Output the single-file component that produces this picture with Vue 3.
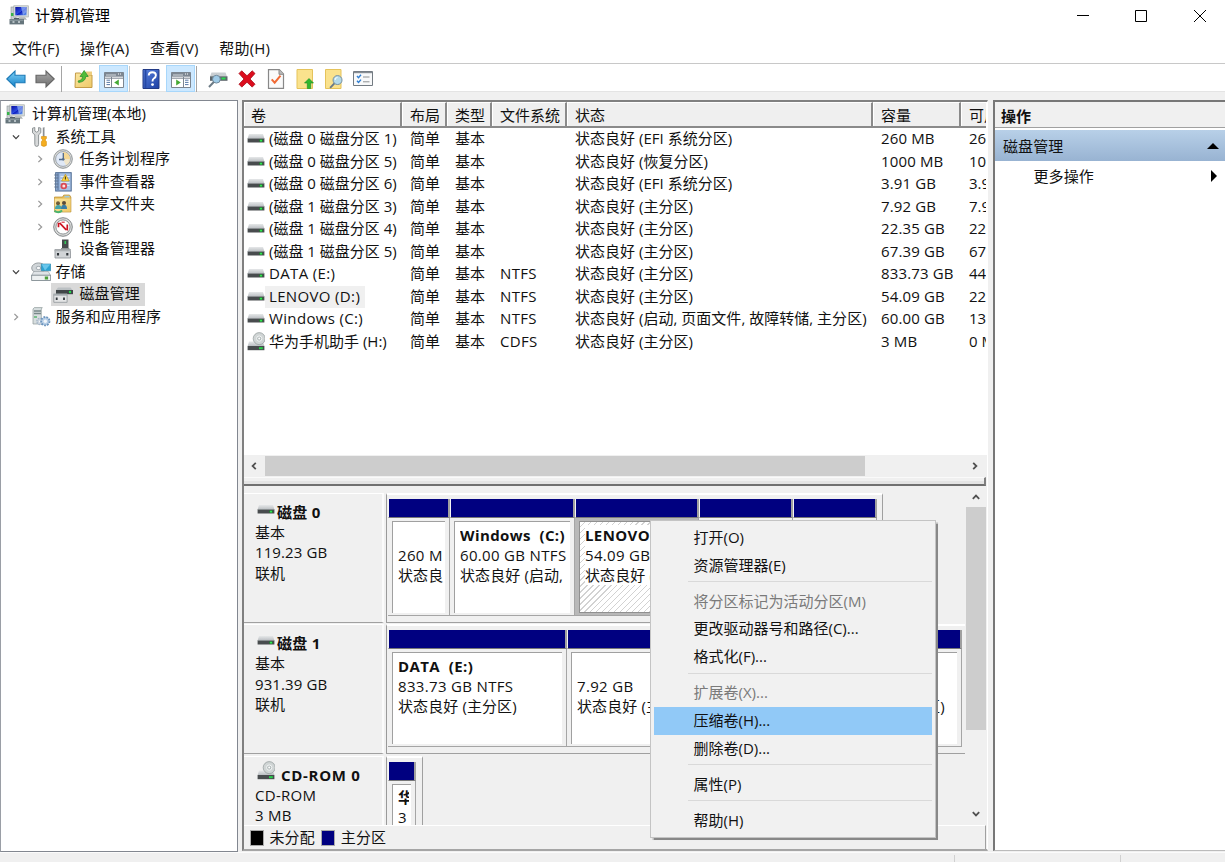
<script setup>
const menus = ['文件(F)', '操作(A)', '查看(V)', '帮助(H)']

const tree = [
  { label: '计算机管理(本地)', icon: 'computer', level: 0, arrow: '' },
  { label: '系统工具', icon: 'tools', level: 1, arrow: 'open' },
  { label: '任务计划程序', icon: 'clock', level: 2, arrow: 'closed' },
  { label: '事件查看器', icon: 'book', level: 2, arrow: 'closed' },
  { label: '共享文件夹', icon: 'share', level: 2, arrow: 'closed' },
  { label: '性能', icon: 'gauge', level: 2, arrow: 'closed' },
  { label: '设备管理器', icon: 'device', level: 2, arrow: '' },
  { label: '存储', icon: 'storage', level: 1, arrow: 'open' },
  { label: '磁盘管理', icon: 'diskmgmt', level: 2, arrow: '', selected: true },
  { label: '服务和应用程序', icon: 'services', level: 1, arrow: 'closed' },
]

const columns = ['卷', '布局', '类型', '文件系统', '状态', '容量', '可用']
const volumes = [
  ['(磁盘 0 磁盘分区 1)', '', '状态良好 (EFI 系统分区)', '260 MB', '26'],
  ['(磁盘 0 磁盘分区 5)', '', '状态良好 (恢复分区)', '1000 MB', '10'],
  ['(磁盘 0 磁盘分区 6)', '', '状态良好 (EFI 系统分区)', '3.91 GB', '3.9'],
  ['(磁盘 1 磁盘分区 3)', '', '状态良好 (主分区)', '7.92 GB', '7.9'],
  ['(磁盘 1 磁盘分区 4)', '', '状态良好 (主分区)', '22.35 GB', '22'],
  ['(磁盘 1 磁盘分区 5)', '', '状态良好 (主分区)', '67.39 GB', '67'],
  ['DATA (E:)', 'NTFS', '状态良好 (主分区)', '833.73 GB', '44'],
  ['LENOVO (D:)', 'NTFS', '状态良好 (主分区)', '54.09 GB', '22'],
  ['Windows (C:)', 'NTFS', '状态良好 (启动, 页面文件, 故障转储, 主分区)', '60.00 GB', '13'],
  ['华为手机助手 (H:)', 'CDFS', '状态良好 (主分区)', '3 MB', '0 M'],
]

const disks = [
  {
    name: '磁盘 0', icon: 'drive', lines: ['基本', '119.23 GB', '联机'], width: 494,
    parts: [
      { w: 62, name: '', size: '260 M', status: '状态良' },
      { w: 125, name: 'Windows  (C:)', size: '60.00 GB NTFS', status: '状态良好 (启动,' },
      { w: 124, name: 'LENOVO', size: '54.09 GB', status: '状态良好 (', selected: true },
      { w: 94, name: '', size: '', status: '' },
      { w: 84, name: '', size: '', status: '' },
    ],
  },
  {
    name: '磁盘 1', icon: 'drive', lines: ['基本', '931.39 GB', '联机'], width: 580,
    parts: [
      { w: 179, name: 'DATA  (E:)', size: '833.73 GB NTFS', status: '状态良好 (主分区)' },
      { w: 110, name: '', size: '7.92 GB', status: '状态良好 (主' },
      { w: 138, name: '', size: '', status: '' },
      { w: 147, name: '', size: '', status: '状态良好 (主分区)', last: true },
    ],
  },
  {
    name: 'CD-ROM 0', icon: 'cd', lines: ['CD-ROM', '3 MB'], width: 34,
    parts: [{ w: 28, name: '华', size: '3', status: '' }],
  },
]

const context = [
  { t: '打开(O)' }, { t: '资源管理器(E)' }, { sep: true },
  { t: '将分区标记为活动分区(M)', off: true }, { t: '更改驱动器号和路径(C)...' }, { t: '格式化(F)...' }, { sep: true },
  { t: '扩展卷(X)...', off: true }, { t: '压缩卷(H)...', hot: true }, { t: '删除卷(D)...' }, { sep: true },
  { t: '属性(P)' }, { sep: true },
  { t: '帮助(H)' },
]
</script>

<template>
  <div class="window">
    <svg class="sprite" width="0" height="0">
      <defs>
        <linearGradient id="gBlue" x1="0" y1="0" x2="0" y2="1"><stop offset="0" stop-color="#7fd0f7" /><stop offset="1" stop-color="#1583c9" /></linearGradient>
        <linearGradient id="gGray" x1="0" y1="0" x2="0" y2="1"><stop offset="0" stop-color="#a9a9a9" /><stop offset="1" stop-color="#6e6e6e" /></linearGradient>
        <linearGradient id="gFolder" x1="0" y1="0" x2="1" y2="1"><stop offset="0" stop-color="#fbe6a0" /><stop offset="1" stop-color="#eec968" /></linearGradient>
        <linearGradient id="gScreen" x1="0" y1="0" x2="1" y2="1"><stop offset="0" stop-color="#0a0fa0" /><stop offset=".5" stop-color="#2a4be0" /><stop offset=".55" stop-color="#0d1dc0" /><stop offset="1" stop-color="#6ba4f5" /></linearGradient>
        <linearGradient id="gHelp" x1="0" y1="0" x2="1" y2="1"><stop offset="0" stop-color="#5b83de" /><stop offset="1" stop-color="#1c3fa3" /></linearGradient>
        <linearGradient id="gMetal" x1="0" y1="0" x2="0" y2="1"><stop offset="0" stop-color="#e6e8e9" /><stop offset="1" stop-color="#b9bdc1" /></linearGradient>
        <symbol id="computer" viewBox="0 0 20 20">
          <rect x="2" y="2" width="5" height="13" fill="#c9cfd2" stroke="#8d9598" stroke-width=".6" /><path d="M2 8h3v3H2z" fill="#35b44a" />
          <rect x="4.8" y=".8" width="14.5" height="11.2" fill="#d8dcda" stroke="#9da3a3" stroke-width=".6" />
          <path d="M6.3 2h11.2v8.3H6.3z" fill="url(#gScreen)" />
          <path d="M12 2h5.3v5l-3.3 3z" fill="#a9c8fb" opacity=".6" />
          <path d="M10 12.2h6l2 2.6H9z" fill="#aeb4b5" />
          <path d="M.5 14h14.5v5.4H.5z" fill="#66757c" /><path d="M5 13h5v1.2H5z" fill="#515f66" />
          <path d="M1 15.2h13.5" stroke="#a7b4b9" stroke-width=".7" /><path d="M3.5 17h2M9 17h2" stroke="#cfd8db" stroke-width="1.6" />
        </symbol>
        <symbol id="tools" viewBox="0 0 20 20">
          <path d="M1.5 1.2v4.6l2.3 2v9.6q0 2 1.9 2t1.9-2V7.8l2.2-2V1.2L7.6.5V4L5.7 5.2 3.8 4V.5z" fill="#d7d9da" stroke="#858a8c" stroke-width=".9" />
          <path d="M12.8.5v9" stroke="#85898b" stroke-width="2" /><path d="M13.4.5v9" stroke="#ced0d2" stroke-width=".9" />
          <path d="M10.4 9.5h5v2.1l-1 .8v1l1 1.2v3.8q-2.5 2-5 0v-3.8l1-1.2v-1l-1-.8z" fill="#f4ad20" stroke="#d28b0c" stroke-width=".6" />
        </symbol>
        <symbol id="clock" viewBox="0 0 20 20">
          <circle cx="10" cy="10" r="9.3" fill="#dcdcd9" stroke="#858b8f" stroke-width=".9" />
          <circle cx="10" cy="10" r="7.4" fill="#dfe8f6" stroke="#8e979f" stroke-width=".8" />
          <path d="M10 2.9A7.1 7.1 0 0 1 17.1 10H10z" fill="#f5d895" /><path d="M17.1 10A7.1 7.1 0 0 1 13 16.4L10 10z" fill="#f6e4b7" opacity=".7" />
          <path d="M10.3 4v6.5H6" fill="none" stroke="#526b8b" stroke-width="1.3" /><circle cx="10.3" cy="10.3" r="1.2" fill="#526b8b" />
        </symbol>
        <symbol id="book" viewBox="0 0 20 20">
          <rect x="2.7" y=".7" width="15.5" height="18.3" fill="#a9c2e6" stroke="#48658d" /><path d="M5 1v17.5" stroke="#7390ba" stroke-width="2.6" />
          <path d="M1.3 3h4M1.3 6h4M1.3 9h4M1.3 12h4M1.3 15h4" stroke="#60758f" stroke-width="1.1" />
          <path d="M7.5 4.5h9M7.5 7.5h9M7.5 10.5h9M7.5 13.5h9" stroke="#e4ecf8" stroke-width=".9" />
          <path d="M12.4 2.2 16.3 9H8.6z" fill="#fcd443" stroke="#b88d12" stroke-width=".6" /><path d="M12.4 4.5v3" stroke="#4c3b08" stroke-width="1.1" />
          <circle cx="10.8" cy="14" r="3.3" fill="#d94b55" /><circle cx="10.8" cy="14" r="1.5" fill="#fbe3e4" />
        </symbol>
        <symbol id="share" viewBox="0 0 20 20">
          <path d="M1.5 3h8l1.3-2h5.7l1.4 2v15H1.5z" fill="#e7bd58" stroke="#b98c30" stroke-width=".7" /><path d="M11.5 1.8h5v1.7h-5z" fill="#9cc9e0" />
          <path d="M1.8 4.6h15.7v13H1.8z" fill="url(#gFolder)" />
          <circle cx="5" cy="9.3" r="2" fill="#6d5c3a" /><circle cx="11" cy="9" r="2" fill="#5c4b38" />
          <path d="M2 15q0-4 3.3-4t3.3 4z" fill="#44a3a8" /><path d="M8 15q0-4.2 3-4.2t3 4.2z" fill="#3b7da6" />
          <path d="M1.5 16.7q4 3.2 7.6-.2" stroke="#48b46f" stroke-width="2" fill="none" />
        </symbol>
        <symbol id="gauge" viewBox="0 0 20 20">
          <circle cx="10" cy="10" r="9.3" fill="#dcdddc" stroke="#767b7e" stroke-width=".9" /><circle cx="10" cy="10" r="7.1" fill="#fff" stroke="#8f9496" stroke-width="1" />
          <path d="M5.5 5.7v4.5M6.6 5.8l6.6 7M14.3 7.4v6" fill="none" stroke="#cc1524" stroke-width="1.7" /><path d="M8.5 5.2h3.2" stroke="#cc1524" stroke-width="1" />
        </symbol>
        <symbol id="device" viewBox="0 0 20 20">
          <path d="M9 .5h6.5v10H9z" fill="#464a4c" /><path d="M12.3 2v3" stroke="#34c759" stroke-width="1.6" /><path d="M8 9h8.4v2H8z" fill="#8c9192" />
          <path d="M2 10.5h15.5V19H2z" fill="#d1d4d7" stroke="#8c9195" stroke-width=".8" /><path d="M1.5 10.5h16.5v1.8H1.5z" fill="#aeb2b5" />
          <path d="M5 14v2.6M14.3 14v2.6" stroke="#2e3338" stroke-width="2.1" />
        </symbol>
        <symbol id="storage" viewBox="0 0 20 20">
          <ellipse cx="7.5" cy="6" rx="6.8" ry="5.1" fill="#d0d5d8" stroke="#858d91" stroke-width=".8" /><ellipse cx="7.5" cy="6" rx="2.4" ry="1.6" fill="#f7f8f9" stroke="#88949b" stroke-width=".7" />
          <path d="M10.3 2h9.4v6.8h-9.4z" fill="#2da3d2" stroke="#247ca2" stroke-width=".6" /><path d="M10.6 2.2h8.8L14 8.5z" fill="#69c6eb" />
          <path d="M2.8 9.5h14.5l2.3 4H.6z" fill="#dfe3e6" stroke="#929aa0" stroke-width=".6" /><path d="M.6 13.2h19v5.3H.6z" fill="#edf0f1" stroke="#747f85" stroke-width=".8" /><path d="M13.8 14.5h3.3v3h-3.3z" fill="#4c9e39" />
        </symbol>
        <symbol id="diskmgmt" viewBox="0 0 20 20">
          <path d="M5 3.4h12.5l2 2.7H3z" fill="#bbc0c3" /><path d="M3 6h17v4.2H3z" fill="#414648" /><circle cx="17" cy="8" r="1.2" fill="#23df4c" />
          <path d="M.8 10.5h13.3v7.8H.8z" fill="#e4e5e6" stroke="#8f9699" stroke-width=".8" /><path d="M.4 9.5h13.8v2.2H.4z" fill="#a6acaf" />
          <path d="M3.7 13.6V16M11 13.6V16" stroke="#33383c" stroke-width="1.8" />
        </symbol>
        <symbol id="services" viewBox="0 0 20 20">
          <path d="M2 2 3.3.6h8l-1 1.4V17H2z" fill="#d7dedf" stroke="#8d999a" stroke-width=".7" /><path d="M3 4h7M3 6.5h7" stroke="#788889" stroke-width="1.3" /><path d="M3 10h3" stroke="#4fb068" stroke-width="1.4" />
          <circle cx="9" cy="14.5" r="3.2" fill="#c7d2dd" stroke="#a3b4c4" stroke-dasharray="1.5 1" stroke-width="1.2" /><circle cx="9" cy="14.5" r="1.1" fill="#f4f6f8" />
          <circle cx="14.3" cy="14.2" r="4.2" fill="#b8cfe7" stroke="#6b94bd" stroke-dasharray="1.8 1.1" stroke-width="1.8" /><circle cx="14.3" cy="14.2" r="1.7" fill="#f3f7fa" />
        </symbol>
        <symbol id="drive" viewBox="0 0 18 20">
          <path d="M2 5h14l1.4 4.6H.6z" fill="url(#gMetal)" /><path d="M.6 9.6h16.8v3.9H.6z" fill="#484c4e" /><path d="M.6 9.5h16.8" stroke="#7c8285" stroke-width=".6" /><path d="M12.3 11.6h3.4" stroke="#138b27" stroke-width="2" /><path d="M13.1 11.6h1.8" stroke="#35ee55" stroke-width="1.8" />
        </symbol>
        <symbol id="cd" viewBox="0 0 18 20">
          <path d="M2 9.6h14l1.4 4.4H.6z" fill="url(#gMetal)" /><circle cx="12.2" cy="6.6" r="6" fill="#d0d5d5" stroke="#90999a" stroke-width=".7" /><circle cx="12.2" cy="6.6" r="2.6" fill="#b2baba" stroke="#f7f9f9" stroke-width=".9" /><circle cx="12.2" cy="6.6" r="1" fill="#fff" />
          <path d="M.6 14h16.8v4.2H.6z" fill="#484c4e" /><path d="M12 16.2h3.8" stroke="#26d349" stroke-width="2" />
        </symbol>
        <symbol id="lens" viewBox="0 0 20 20">
          <path d="M8 11.8 2 18" stroke="#687988" stroke-width="2.4" /><circle cx="11.3" cy="8.2" r="5.6" fill="#acd9f3" fill-opacity=".9" stroke="#718b9e" stroke-width="1.2" /><path d="M8.3 8a3 3 0 0 1 3-3" stroke="#eef9ff" fill="none" stroke-width="1.4" />
        </symbol>
        <symbol id="chevron" viewBox="0 0 10 10"><path d="M3.4 1.9 6.6 5 3.4 8.1" fill="none" stroke="currentColor" stroke-width="1.3" /></symbol>
        <symbol id="scrollarrow" viewBox="0 0 10 10"><path d="M3.2 1.8 6.4 5 3.2 8.2" fill="none" stroke="currentColor" stroke-width="1.8" /></symbol>
      </defs>
    </svg>

    <header class="title">
      <svg class="app"><use href="#computer" /></svg><span>计算机管理</span>
      <div class="controls">
        <svg viewBox="0 0 12 12"><path d="M0 5.5h12" /></svg>
        <svg viewBox="0 0 12 12"><path d="M.5.5h11v11H.5z" /></svg>
        <svg viewBox="0 0 12 12"><path d="m0 0 12 12M12 0 0 12" /></svg>
      </div>
    </header>
    <nav class="menubar"><span v-for="m in menus" :key="m">{{ m }}</span></nav>
    <div class="toolbar">
      <svg class="t20" viewBox="0 0 20 20"><path d="M.8 10 9 2v4.3h10v7.5H9V18z" fill="url(#gBlue)" stroke="#1c7ab6" stroke-width="1.1" /></svg>
      <svg class="t20 fwd" viewBox="0 0 20 20"><path d="M19.2 10 11 2v4.3H1v7.5h10V18z" fill="url(#gGray)" stroke="#646464" stroke-width="1.1" /></svg>
      <i class="bar b1"></i>
      <svg class="t20 up" viewBox="0 0 20 20"><path d="M1.5 4h5l1.5 2h10v12.5h-17z" fill="url(#gFolder)" stroke="#c49c49" /><path d="M12 2.5h6V6h-6z" fill="#edce80" /><path d="M4 12q4.5-.7 4.5-4.5H6L10.2 1.5l4 6h-2.5q0 5-7 6z" fill="#51bd39" stroke="#268d2a" stroke-width=".7" /></svg>
      <span class="pressed p1"><svg viewBox="0 0 20 20"><path d="M.5 2.5h19v15H.5z" fill="#fff" stroke="#7b8590" /><path d="M.5 2.5h19v4.2H.5z" fill="#7d8792" /><path d="M2 5h10" stroke="#d4d9dd" /><path d="M14 4h4" stroke="#fff" stroke-dasharray="1 1" /><path d="M7.5 7v10M1 8.2h18" stroke="#7b8590" /><path d="M2.5 10.2H6M2.5 12.4H6M2.5 14.6H6" stroke="#5779a7" /><path d="M14.8 9.5v6L10.2 12.5z" fill="#45a935" /></svg></span>
      <i class="bar b2"></i>
      <svg class="help" viewBox="0 0 18 20"><path d="M1 .5h16v19H1z" fill="url(#gHelp)" stroke="#233b86" /><path d="M3.5 1v18" stroke="#2749a5" stroke-width="1.8" /><path d="M6.7 6.5q.2-3.2 3.6-3.2 3.6 0 3.6 3 0 2-2.1 3.2-1.3.8-1.3 3" fill="none" stroke="#fff" stroke-width="1.9" /><circle cx="10.5" cy="15.6" r="1.4" fill="#fff" /></svg>
      <span class="pressed p2"><svg viewBox="0 0 20 20"><path d="M.5 2.5h19v15H.5z" fill="#fff" stroke="#7b8590" /><path d="M.5 2.5h19v4.2H.5z" fill="#7d8792" /><path d="M2 5h10" stroke="#d4d9dd" /><path d="M14 4h4" stroke="#fff" stroke-dasharray="1 1" /><path d="M12.5 7v10M1 8.2h18" stroke="#7b8590" /><path d="M14 10.2h3.5M14 12.4h3.5M14 14.6h3.5" stroke="#5779a7" /><path d="M5.2 9.5v6l4.6-3z" fill="#45a935" /></svg></span>
      <i class="bar b3"></i>
      <svg class="t20 scan" viewBox="0 0 20 20"><path d="M3.5 3.5h14l1.5 4H2z" fill="#c9ced1" /><path d="M2 7.3h17.5v4.5H2z" fill="#5d666b" /><path d="M13.5 9.5h4" stroke="#28dc4f" stroke-width="2" /><circle cx="8.4" cy="10.2" r="3.9" fill="#9fcbe7" stroke="#718a9c" /><path d="M5.8 13 1 18" stroke="#6c7b86" stroke-width="2" /></svg>
      <svg class="t20 del" viewBox="0 0 20 20"><path d="M2 4.5 4.7 1.8 10 6.8l5.2-5L18 4.5 13 10l5 5.2-2.8 2.9L10 13.2l-5.2 4.9L2 15.2 7 10z" fill="#dc0d1d" stroke="#a80b18" stroke-width=".8" /></svg>
      <svg class="t20 check" viewBox="0 0 20 20"><path d="M2.5.7h10.8l4.2 4.2v14.4h-15z" fill="#fafafa" stroke="#888" stroke-width="1.2" /><path d="M13 1v4.3h4.3" fill="#bcbcbc" stroke="#888" /><path d="m5.7 10.3 3 3.3 5.8-7" fill="none" stroke="#f06a35" stroke-width="2" /></svg>
      <svg class="t20 page" viewBox="0 0 20 20"><path d="M2 .5h15.5v19H2z" fill="#fae28d" stroke="#e5c35b" /><path d="M14 9.5 9.5 14h2.8v5.5h3.4V14h2.8z" fill="#32b72d" stroke="#168b23" stroke-width=".6" /></svg>
      <svg class="t20 find" viewBox="0 0 20 20"><path d="M1.5.5H17v19H1.5z" fill="#fae28d" stroke="#e5c35b" /><use href="#lens" x="4.5" y="4.5" width="16" height="16" /></svg>
      <svg class="t20 opts" viewBox="0 0 20 20"><path d="M.5 2.5h19v14H.5z" fill="#f8f9fa" stroke="#737b82" /><path d="M1 3.5h18" stroke="#858c92" stroke-width="1.4" /><path d="m4 7 1.5 1.7L8 5.8M4 11.8l1.5 1.7L8 10.6" stroke="#2f7ed2" fill="none" stroke-width="1.4" /><path d="M10 8h6.5M10 12.8h6.5" stroke="#8c9092" /></svg>
    </div>

    <main class="panes">
      <aside class="tree">
        <div v-for="n in tree" :key="n.label" class="node" :class="['l' + n.level, { selected: n.selected }]">
          <span class="arrow" :class="n.arrow"><svg v-if="n.arrow"><use href="#chevron" /></svg></span>
          <span class="item"><svg class="nicon"><use :href="'#' + n.icon" /></svg><span class="ntext">{{ n.label }}</span></span>
        </div>
      </aside>

      <section class="center">
        <div class="volumes">
          <div class="row head"><span v-for="c in columns" :key="c">{{ c }}</span></div>
          <div v-for="(v, i) in volumes" :key="i" class="row">
            <span class="vol"><svg><use :href="i === 9 ? '#cd' : '#drive'" /></svg><b :class="{ sel: i === 7, latin: i > 5 && i < 9 }">{{ v[0] }}</b></span>
            <span>简单</span><span>基本</span><span class="latin">{{ v[1] }}</span><span>{{ v[2] }}</span><span class="size">{{ v[3] }}</span><span>{{ v[4] }}</span>
          </div>
        </div>
        <div class="hscroll">
          <svg class="left"><use href="#scrollarrow" /></svg><div class="thumb"></div><svg class="right"><use href="#scrollarrow" /></svg>
        </div>
        <div class="splitter"></div>
        <div class="graph">
          <div class="disks">
            <div v-for="d in disks" :key="d.name" class="disk">
              <div class="label" :class="d.icon">
                <div class="dname"><svg><use :href="'#' + d.icon" /></svg><span>{{ d.name }}</span></div>
                <div v-for="l in d.lines" :key="l" class="dline">{{ l }}</div>
              </div>
              <div class="parts" :style="{ width: d.width + 'px' }">
                <div v-for="(p, k) in d.parts" :key="k" class="part" :class="{ active: p.selected, last: p.last }" :style="{ width: p.w + 'px' }">
                  <div class="navy"></div>
                  <div class="body"><div class="inner"><b>{{ p.name }}</b><span class="psize">{{ p.size }}</span><span>{{ p.status }}</span></div></div>
                </div>
              </div>
            </div>
          </div>
          <div class="vscroll"><svg class="up2"><use href="#scrollarrow" /></svg><div class="vthumb"></div><svg class="down2"><use href="#scrollarrow" /></svg></div>
        </div>
        <div class="legend"><i class="black"></i><span>未分配</span><i class="blue"></i><span>主分区</span></div>
      </section>

      <aside class="actions">
        <div class="ahead">操作</div>
        <div class="agroup"><span>磁盘管理</span><svg viewBox="0 0 12 8"><path d="M0 7h12L6 1z" /></svg></div>
        <div class="amore"><span>更多操作</span><svg viewBox="0 0 8 12"><path d="M1 0v12l6-6z" /></svg></div>
      </aside>
    </main>
    <footer class="status"><i></i><i></i></footer>

    <div class="context">
      <template v-for="(c, i) in context" :key="i">
        <div v-if="c.sep" class="sep"></div>
        <div v-else class="citem" :class="{ off: c.off, hot: c.hot }">{{ c.t }}</div>
      </template>
    </div>
  </div>
</template>

<style>
body { overflow: hidden; }
</style>

<style scoped>
* { box-sizing: border-box; }
.window { position: relative; width: 1225px; height: 862px; overflow: hidden; display: flex; flex-direction: column; background: #f0f0f0; color: #111; font: 15px/22.5px "Open Sans", "Noto Sans CJK SC", sans-serif; white-space: pre; }
svg { display: block; flex: none; }
.sprite { position: absolute; }
.title { height: 34px; display: flex; align-items: center; padding: 0 0 4px 9px; background: #fff; flex: none; color: #000; }
.app { width: 20px; height: 20px; margin-right: 6px; }
.controls { margin-left: auto; display: flex; gap: 47px; padding: 1px 19px 0 0; }
.controls svg { width: 12px; height: 12px; fill: none; stroke: #000; stroke-width: 1; overflow: visible; }
.controls svg:first-child { margin-right: -1px; }
.menubar { height: 30px; display: flex; gap: 20.5px; align-items: center; padding-left: 12px; background: #fff; border-bottom: 1.5px solid #c8c8c8; flex: none; }
.menubar span { letter-spacing: .2px; }
.toolbar { height: 28px; display: flex; align-items: center; padding-left: 6px; background: #fff; border-bottom: 1px solid #e4e4e4; flex: none; padding-top: 3px; }
.t20 { width: 20px; height: 20px; }
.fwd { margin-left: 9px; }
.bar { width: 1px; height: 26px; background: #a5a5a5; }
.b1 { margin-left: 6px; }
.up { margin-left: 12px; }
.pressed { width: 29px; height: 27px; background: #cce8ff; border: 1px solid #a8d7fb; display: flex; align-items: center; justify-content: center; margin-top: -1px; }
.pressed svg { width: 20px; height: 20px; margin-top: 2px; }
.p1 { margin-left: 5px; }
.b2 { margin-left: 1px; background: #c8c8c8; }
.help { width: 18px; height: 20px; margin-left: 12px; }
.p2 { margin-left: 6px; }
.b3 { margin-left: 1px; }
.scan { margin-left: 11px; }
.del { margin-left: 9px; }
.check { margin-left: 9px; }
.page { margin-left: 9px; }
.find { margin-left: 9px; }
.opts { margin-left: 9px; }
.panes { height: 760px; display: flex; flex: none; padding-top: 8px; }
.tree { width: 238px; border: 1.5px solid #828790; border-left-color: #9a9ea6; background: #fff; padding-top: 2px; flex: none; }
.node { height: 22.5px; display: flex; align-items: center; }
.ntext { margin-top: -1.5px; }
.arrow { width: 10px; height: 10px; color: #9a9a9a; }
.arrow svg { width: 10px; height: 10px; }
.arrow.open { color: #404040; transform: rotate(90deg); }
.l0 .arrow { width: 0; }
.l0 .item { margin-left: 4px; }
.l1 .arrow { margin-left: 10px; }
.l1 .item { margin-left: 6px; }
.l2 .arrow { margin-left: 34px; }
.l2 .item { margin-left: 6px; padding: 0 5px 0 2px; }
.item { display: flex; align-items: center; height: 22.5px; padding: 0 4px 0 4px; letter-spacing: .1px; }
.l0 .item { padding-left: 0; gap: 7px; letter-spacing: 0; }
.nicon { width: 20px; height: 20px; }
.l1 .item { gap: 4.5px; }
.l2 .item { gap: 6.5px; }
.selected .item { background: #d9d9d9; }
.center { width: 746px; margin-left: 4px; border-left: 2px solid #808080; border-right: 1.5px solid #fff; border-bottom: 2px solid #a5a5a5; flex: none; display: flex; flex-direction: column; height: 751px; border-top: 2px solid #808080; }
.volumes { height: 353px; background: #fff; overflow: hidden; flex: none; }
.row { display: grid; grid-template-columns: 158px 45px 45px 75px 306px 88px 40px; height: 22.5px; width: 742px; overflow: hidden; line-height: 21.5px; }
.row > span { padding-left: 8px; overflow: hidden; }
.row > span:nth-child(5) { letter-spacing: .02px; }
.row > .latin, .vol .latin { letter-spacing: .35px; }
.row > .size { letter-spacing: .15px; }
.head { height: 26px; background: #efefef; border-bottom: 2px solid #8a8a8a; line-height: 25.5px; }
.head > span { border-right: 2px solid #8a8a8a; border-top: 1.5px solid #fff; border-left: 1px solid #fff; padding-left: 7px; }
.head > span:first-child { padding-left: 6px; }
.row > .vol { display: flex; padding-left: 3px; }
.vol svg { width: 18px; height: 20px; margin-top: 1px; }
.vol b { font-weight: 400; padding: 0 5px 0 4px; }
.vol b.sel { background: #f0f0f0; }
.hscroll { height: 21px; display: flex; align-items: center; background: #f0f0f0; color: #505050; flex: none; }
.hscroll svg { width: 10px; height: 10px; }
.left { transform: rotate(180deg); margin: 0 6px 0 5px; }
.thumb { width: 600px; height: 20px; background: #cdcdcd; }
.right { margin-left: 105px; }
.splitter { height: 9px; border-top: 1px solid #fafafa; border-bottom: 2px solid #707070; border-right: 2px solid #808080; margin: 1px 1px 0 0; flex: none; box-shadow: inset 0 -3px #e4e4e4; }
.graph { display: flex; flex: 1; min-height: 0; }
.disks { width: 721px; overflow: hidden; padding-top: 7px; flex: none; }
.disk { display: flex; height: 131.3px; }
.label { width: 140px; height: 130px; border-top: 1.5px solid #fff; border-bottom: 1.5px solid #a0a0a0; border-right: 2px solid #fbfbfb; padding: 8px 0 0 11px; line-height: 20.3px; flex: none; letter-spacing: .1px; }
.dname { display: flex; font-weight: 700; height: 20px; letter-spacing: .3px; }
.dname svg { width: 18px; height: 20px; margin: -2px 2px 0 2px; }
.cd .dname svg { margin: -4px 6px 0 2px; }
.cd { letter-spacing: .3px; }
.cd .dname { letter-spacing: .7px; }
.dline { height: 20.3px; }
.parts { height: 130px; margin-left: 2px; border-top: 2px solid #fff; border-right: 1.5px solid #a0a0a0; border-left: 1.5px solid #9a9a9a; border-bottom: 1.5px solid #a0a0a0; padding: 4px 0 0 1px; display: flex; flex: none; }
.disk:nth-child(-n+3) .parts { box-sizing: content-box; height: 122.5px; }
.parts { margin-right: 0; }
.part { flex: none; height: 118px; display: flex; flex-direction: column; }
.navy { height: 19px; background: #000080; border-right: 2px solid #a0a0a0; border-bottom: 1px solid #777; border-left: 1px solid #f4f4f4; }
.body { height: 98px; padding: 3px 4px 4px 4px; border-right: 1.5px solid #a5a5a5; border-bottom: 1.5px solid #a5a5a5; }
.inner { height: 91.5px; overflow: hidden; background: #fff; border-left: 1.5px solid #a0a0a0; border-top: 1.5px solid #a0a0a0; padding: 2.5px 0 0 5px; line-height: 20.3px; display: flex; flex-direction: column; }
.inner > * { height: 20.3px; overflow: hidden; flex: none; margin-right: 2px; letter-spacing: .1px; }
.inner > b { letter-spacing: .4px; }
.inner > .psize { letter-spacing: .33px; }
.active .body { background: #b8b8b8; }
.active .inner { border: 1px solid #909090; background: repeating-linear-gradient(135deg, #fff 0 3.2px, #d2d2d2 3.2px 4.2px); }
.active .inner > * { background: #fff; }
.last .inner { padding-left: 6px; }
.vscroll { width: 20px; margin-left: 1px; display: flex; flex-direction: column; align-items: center; color: #505050; background: #f0f0f0; }
.vscroll svg { width: 10px; height: 10px; }
.up2 { transform: rotate(-90deg); margin: 6px 0 5px; }
.vthumb { width: 20px; height: 223px; background: #cdcdcd; }
.down2 { transform: rotate(90deg); margin-top: 79px; }
.legend { height: 24px; display: flex; align-items: center; border-top: 1.5px solid #fff; border-right: 1.5px solid #a0a0a0; padding-left: 6px; flex: none; width: 742px; letter-spacing: .1px; }
.legend i { width: 14px; height: 16px; border: 1px solid #aaa; }
.black { background: #000; }
.blue { background: #000080; }
.legend span { margin: 0 6.5px 0 5.5px; }
.actions { flex: 1; margin-left: 5px; height: 751px; background: #fff; border-left: 2px solid #777; border-top: 2.5px solid #777; border-bottom: 1.5px solid #bbb; }
.ahead { height: 26px; background: #f0f0f0; font-weight: 700; border-bottom: 1.5px solid #a0a0a0; padding-left: 6px; line-height: 28px; }
.agroup { margin-top: 2px; height: 31px; background: linear-gradient(#b8d0e8, #98b3d2); display: flex; align-items: center; justify-content: space-between; padding: 1px 6px 0 8px; letter-spacing: .1px; }
.agroup svg { width: 12px; height: 8px; }
.amore { height: 30px; display: flex; align-items: center; justify-content: space-between; padding: 0 7px 0 38.5px; letter-spacing: .1px; }
.amore svg { width: 8px; height: 12px; }
.status { flex: 1; border-top: 1.5px solid #fbfbfb; display: flex; justify-content: flex-end; gap: 165px; padding: 2px 104px 0 0; }
.status i { width: 1px; height: 8px; background: #d0d0d0; }
.context { position: absolute; left: 650px; top: 520px; width: 286px; height: 318px; background: #f1f1f1; border: 1px solid #c4c4c4; padding: 3px 3px 0 3px; box-shadow: 1.5px 1.5px 1px #888; }
.citem { height: 27.6px; line-height: 27px; padding-left: 39.5px; letter-spacing: 0; }
.off { color: #7a7a7a; }
.hot { background: #91c9f7; }
.sep { height: 8.7px; padding-top: 2px; margin-left: 34px; }
.sep::after { content: ""; display: block; height: 1px; background: #d9d9d9; }
</style>
